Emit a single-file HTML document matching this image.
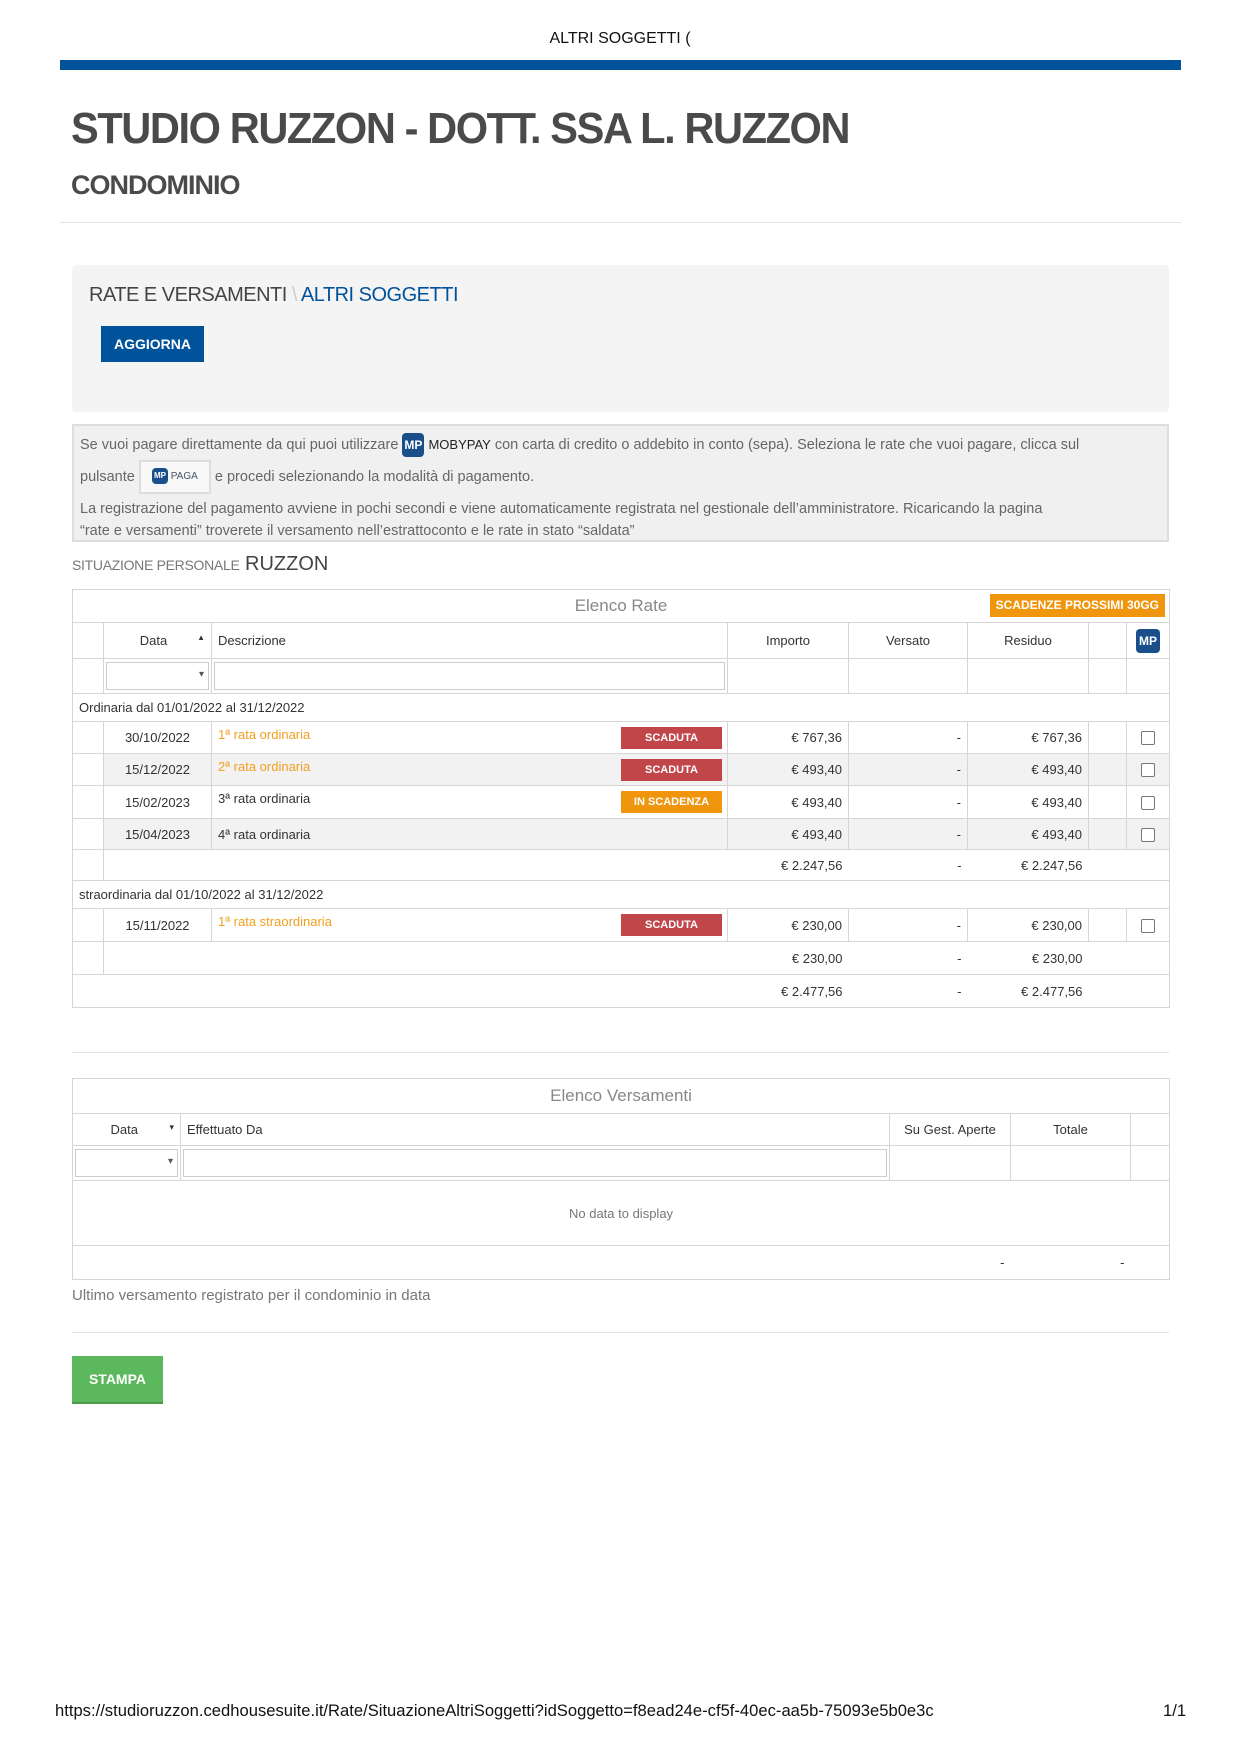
<!DOCTYPE html>
<html><head><meta charset="utf-8">
<style>
*{box-sizing:border-box;margin:0;padding:0}
body{width:1240px;height:1754px;background:#fff;font-family:"Liberation Sans",sans-serif;color:#555;position:relative;overflow:hidden}
.abs{position:absolute}
.hdr{top:30px;left:0;width:1240px;text-align:center;font-size:16px;color:#111}
.bar{left:60px;top:60px;width:1121px;height:10px;background:#00529b}
.title{left:71px;top:104px;font-size:44px;font-weight:bold;color:#4a4a4a;letter-spacing:-1.5px;transform:scaleX(.945);transform-origin:left}
.cond{left:71px;top:170px;font-size:27px;font-weight:bold;color:#4a4a4a;letter-spacing:-1px}
.hr{left:60px;width:1121px;height:1px;background:#e2e2e2}
.panel{left:72px;top:265px;width:1097px;height:147px;background:#f4f4f4;border-radius:4px}
.bc{left:89px;top:284px;font-size:20px;color:#444;letter-spacing:-.5px}
.bc span{color:#00529b}
.btn{left:101px;top:326px;width:103px;height:36px;background:#00529b;color:#fff;font-size:14px;font-weight:bold;text-align:center;line-height:36px}
.info{left:72px;top:424px;width:1097px;height:118px;background:#f0f0f0;border:2px solid #ddd;font-size:14.5px;color:#666;padding:4px 6px}
.mp{display:inline-block;width:22px;height:24px;background:#1a4f8b;border-radius:4px;color:#fff;font-size:12px;line-height:24px;text-align:center;vertical-align:middle;font-weight:bold}
.paga{display:inline-block;width:72px;height:34px;border:2px solid #ddd;background:#f8f8f8;vertical-align:middle;font-size:10px;line-height:30px;text-align:center;color:#456}
.sit{left:72px;top:553px;font-size:20px;color:#444}
.sit small{font-size:14px;color:#777;letter-spacing:-.3px}
table{position:absolute;border-collapse:collapse;table-layout:fixed;font-size:13px;color:#333}
td{border:1px solid #d6d6d6;padding:0 6px;white-space:nowrap;overflow:hidden}
.r{text-align:right}.c{text-align:center}
.ttl{font-size:17px;color:#888;text-align:center}
.gray td.g{background:#f2f2f2}
.or{color:#f0a020}
.bdg{float:right;width:101px;height:22px;line-height:22px;color:#fff;font-size:11px;font-weight:bold;text-align:center;background:#c0464a;margin-right:-1px}
.bdg.o{background:#f0950e}
.cb{display:inline-block;width:14px;height:14px;border:1px solid #777;border-radius:2px;background:#fff;vertical-align:middle}
.sel{height:28px;border:1px solid #ccc;background:#fff;position:relative}
.sel:after{content:"▾";position:absolute;right:4px;top:6px;font-size:10px;color:#555}
.inp{height:28px;border:1px solid #ccc;background:#fff}
.stampa{left:72px;top:1356px;width:91px;height:48px;background:#5cb85c;color:#fff;font-weight:bold;font-size:14px;line-height:46px;text-align:center;border-bottom:2px solid #4a9a4a}
.foot{top:1701px;font-size:16.6px;color:#111}
</style></head><body>
<div class="abs hdr">ALTRI SOGGETTI (</div>
<div class="abs bar"></div>
<div class="abs title">STUDIO RUZZON - DOTT. SSA L. RUZZON</div>
<div class="abs cond">CONDOMINIO</div>
<div class="abs hr" style="top:222px"></div>
<div class="abs panel"></div>
<div class="abs bc">RATE E VERSAMENTI <b style="color:#ccc;font-weight:normal">\</b> <span>ALTRI SOGGETTI</span></div>
<div class="abs btn">AGGIORNA</div>
<div class="abs info">
<div style="line-height:30px">Se vuoi pagare direttamente da qui puoi utilizzare <span class="mp">MP</span> <span style="font-size:13px;color:#222">MOBYPAY</span> con carta di credito o addebito in conto (sepa). Seleziona le rate che vuoi pagare, clicca sul</div>
<div style="line-height:32px">pulsante <span class="paga"><span class="mp" style="width:16px;height:16px;font-size:8px;line-height:16px">MP</span> PAGA</span> e procedi selezionando la modalità di pagamento.</div>
<div style="line-height:22px;margin-top:4px">La registrazione del pagamento avviene in pochi secondi e viene automaticamente registrata nel gestionale dell’amministratore. Ricaricando la pagina<br>“rate e versamenti” troverete il versamento nell’estrattoconto e le rate in stato “saldata”</div>
</div>
<div class="abs sit"><small>SITUAZIONE PERSONALE</small> RUZZON</div>

<table style="left:72px;top:589px;width:1097px">
<colgroup><col style="width:31px"><col style="width:108px"><col style="width:516px"><col style="width:121px"><col style="width:119px"><col style="width:121px"><col style="width:38px"><col style="width:43px"></colgroup>
<tr style="height:33px"><td colspan="8" class="ttl" style="position:relative">Elenco Rate<span style="position:absolute;right:4px;top:4px;background:#f0950e;color:#fff;font-size:12px;font-weight:bold;padding:0 6px;line-height:23px">SCADENZE PROSSIMI 30GG</span></td></tr>
<tr style="height:36px"><td></td><td class="c">Data <span style="float:right;font-size:8px">▲</span></td><td>Descrizione</td><td class="c">Importo</td><td class="c">Versato</td><td class="c">Residuo</td><td></td><td class="c"><span class="mp" style="width:24px;height:24px">MP</span></td></tr>
<tr style="height:35px"><td></td><td style="padding:2px"><div class="sel"></div></td><td style="padding:2px"><div class="inp"></div></td><td></td><td></td><td></td><td></td><td></td></tr>
<tr style="height:28px"><td colspan="8">Ordinaria dal 01/01/2022 al 31/12/2022</td></tr>
<tr style="height:32px"><td></td><td class="c">30/10/2022</td><td><span class="or">1ª rata ordinaria</span><span class="bdg">SCADUTA</span></td><td class="r">€ 767,36</td><td class="r">-</td><td class="r">€ 767,36</td><td></td><td class="c"><span class="cb"></span></td></tr>
<tr style="height:32px" class="gray"><td></td><td class="c g">15/12/2022</td><td class="g"><span class="or">2ª rata ordinaria</span><span class="bdg">SCADUTA</span></td><td class="r g">€ 493,40</td><td class="r g">-</td><td class="r g">€ 493,40</td><td class="g"></td><td class="c g"><span class="cb"></span></td></tr>
<tr style="height:33px"><td></td><td class="c">15/02/2023</td><td>3ª rata ordinaria<span class="bdg o">IN SCADENZA</span></td><td class="r">€ 493,40</td><td class="r">-</td><td class="r">€ 493,40</td><td></td><td class="c"><span class="cb"></span></td></tr>
<tr style="height:31px" class="gray"><td></td><td class="c g">15/04/2023</td><td class="g">4ª rata ordinaria</td><td class="r g">€ 493,40</td><td class="r g">-</td><td class="r g">€ 493,40</td><td class="g"></td><td class="c g"><span class="cb"></span></td></tr>
<tr style="height:31px"><td></td><td colspan="2" style="border-right:0"></td><td class="r" style="border:0;border-bottom:1px solid #d6d6d6">€ 2.247,56</td><td class="r" style="border:0;border-bottom:1px solid #d6d6d6">-</td><td class="r" style="border:0;border-bottom:1px solid #d6d6d6">€ 2.247,56</td><td colspan="2" style="border-left:0"></td></tr>
<tr style="height:28px"><td colspan="8">straordinaria dal 01/10/2022 al 31/12/2022</td></tr>
<tr style="height:33px"><td></td><td class="c">15/11/2022</td><td><span class="or">1ª rata straordinaria</span><span class="bdg">SCADUTA</span></td><td class="r">€ 230,00</td><td class="r">-</td><td class="r">€ 230,00</td><td></td><td class="c"><span class="cb"></span></td></tr>
<tr style="height:33px"><td></td><td colspan="2" style="border-right:0"></td><td class="r" style="border:0;border-bottom:1px solid #d6d6d6">€ 230,00</td><td class="r" style="border:0;border-bottom:1px solid #d6d6d6">-</td><td class="r" style="border:0;border-bottom:1px solid #d6d6d6">€ 230,00</td><td colspan="2" style="border-left:0"></td></tr>
<tr style="height:33px"><td colspan="3" style="border-right:0"></td><td class="r" style="border:0;border-bottom:1px solid #d6d6d6">€ 2.477,56</td><td class="r" style="border:0;border-bottom:1px solid #d6d6d6">-</td><td class="r" style="border:0;border-bottom:1px solid #d6d6d6">€ 2.477,56</td><td colspan="2" style="border-left:0"></td></tr>
</table>

<div class="abs hr" style="top:1052px;left:72px;width:1097px"></div>

<table style="left:72px;top:1078px;width:1097px">
<colgroup><col style="width:108px"><col style="width:709px"><col style="width:121px"><col style="width:120px"><col style="width:39px"></colgroup>
<tr style="height:35px"><td colspan="5" class="ttl">Elenco Versamenti</td></tr>
<tr style="height:32px"><td class="c">Data <span style="float:right;font-size:9px">▾</span></td><td>Effettuato Da</td><td class="c">Su Gest. Aperte</td><td class="c">Totale</td><td></td></tr>
<tr style="height:35px"><td style="padding:2px"><div class="sel"></div></td><td style="padding:2px"><div class="inp"></div></td><td></td><td></td><td></td></tr>
<tr style="height:65px"><td colspan="5" class="c" style="color:#777">No data to display</td></tr>
<tr style="height:34px"><td colspan="2" style="border-right:0"></td><td class="r" style="border:0;border-bottom:1px solid #d6d6d6">-</td><td class="r" style="border:0;border-bottom:1px solid #d6d6d6">-</td><td style="border-left:0"></td></tr>
</table>

<div class="abs" style="left:72px;top:1287px;font-size:15px;color:#777;width:385px;overflow:hidden;white-space:nowrap">Ultimo versamento registrato per il condominio in data</div>
<div class="abs hr" style="top:1332px;left:72px;width:1097px"></div>
<div class="abs stampa">STAMPA</div>
<div class="abs foot" style="left:55px">https://studioruzzon.cedhousesuite.it/Rate/SituazioneAltriSoggetti?idSoggetto=f8ead24e-cf5f-40ec-aa5b-75093e5b0e3c</div>
<div class="abs foot" style="left:1163px">1/1</div>
</body></html>
